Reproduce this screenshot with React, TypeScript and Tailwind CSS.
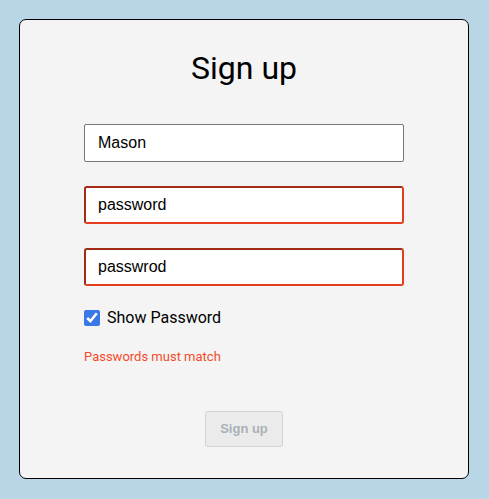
import React, { useState } from 'react'

const App = () => {
  const [username, setUsername] = useState('Mason')
  const [password, setPassword] = useState('password')
  const [confirm, setConfirm] = useState('passwrod')
  const [show, setShow] = useState(true)

  const mismatch = password !== confirm

  const badInput =
    'border-2 border-t-[#a32a15] border-l-[#a32a15] border-r-[#e33d1c] border-b-[#e33d1c] rounded-[3px]'

  return (
    <div className="min-h-[499px] w-full bg-[#b8d6e6] pt-[19px] pl-[19px]">
      <div className="flex flex-col items-center w-[450px] h-[460px] bg-[#f4f4f4] border border-black rounded-[7px] pt-[29px]">
        <h1 className="font-['Roboto',sans-serif] text-[32px] leading-[38px] text-black">Sign up</h1>
        <div className="flex flex-col w-[320px] mt-[37px]">
          <input
            type="text"
            value={username}
            onChange={(e) => setUsername(e.target.value)}
            className="h-[38px] w-full bg-white border border-[#767676] rounded-[2px] px-[13px] font-['Liberation_Sans',Arial,sans-serif] text-[16px] text-black outline-none"
          />
          <input
            type={show ? 'text' : 'password'}
            value={password}
            onChange={(e) => setPassword(e.target.value)}
            className={`mt-6 h-[38px] w-full bg-white px-[12px] font-['Liberation_Sans',Arial,sans-serif] text-[16px] text-black outline-none ${badInput}`}
          />
          <input
            type={show ? 'text' : 'password'}
            value={confirm}
            onChange={(e) => setConfirm(e.target.value)}
            className={`mt-6 h-[38px] w-full bg-white px-[12px] font-['Liberation_Sans',Arial,sans-serif] text-[16px] text-black outline-none ${badInput}`}
          />
          <label className="flex items-center mt-[20px] gap-[7px] font-['Roboto',sans-serif] text-[16px] text-black">
            <input
              type="checkbox"
              checked={show}
              onChange={(e) => setShow(e.target.checked)}
              className="w-4 h-4 m-0 accent-[#3b78e7]"
            />
            Show Password
          </label>
          {mismatch && (
            <p className="mt-[20px] font-['Roboto',sans-serif] text-[13px] leading-[14px] text-[#f34b2a]">
              Passwords must match
            </p>
          )}
        </div>
        <button
          disabled
          className="mt-[47px] w-[78px] h-[36px] bg-[#ebebeb] border border-[#d3d3d3] rounded-[3px] font-['Liberation_Sans',Arial,sans-serif] font-bold text-[13px] text-[#a9b1b6]"
        >
          Sign up
        </button>
      </div>
    </div>
  )
}

export default App
